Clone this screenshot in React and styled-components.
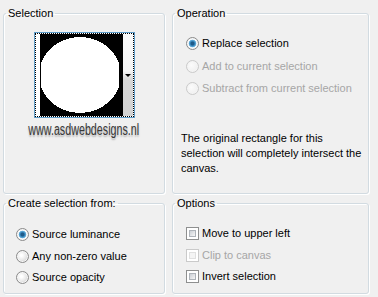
import React from 'react'
import styled, { createGlobalStyle } from 'styled-components'

const GlobalStyle = createGlobalStyle`
  html, body {
    margin: 0;
    padding: 0;
    background: #f0f0f0;
  }
  body {
    font-family: "Liberation Sans", Arial, sans-serif;
    font-size: 11px;
    color: #000;
  }
`;

const Dialog = styled.div`
  display: grid;
  grid-template-columns: 162px 197px;
  grid-template-rows: 188px 98px;
  column-gap: 7px;
  row-gap: 2px;
  padding: 6px 0 0 3px;
  width: 378px;
  height: 297px;
  box-sizing: border-box;
  background: #f0f0f0;
`;

const Group = styled.fieldset`
  margin: 0;
  min-width: 0;
  padding: ${props => props.$padTop || 14}px 8px 0 8px;
  border: 1px solid #d2dbe1;
  border-radius: 3px;
  box-shadow: 1px 1px 0 #fff, inset 1px 1px 0 #fff;
  box-sizing: border-box;

  legend {
    margin-left: -6px;
    padding: 0 2px;
    line-height: 15px;
    font-size: 11px;
  }
`;

const PreviewColumn = styled.div`
  display: flex;
  flex-direction: column;
  align-items: center;
`;

const PreviewFrame = styled.div`
  width: 101px;
  height: 86px;
  box-sizing: border-box;
  border: 1px solid #5f9cc8;
  position: relative;
  display: flex;
  background: #fff;

  &::after {
    content: '';
    position: absolute;
    inset: 0;
    border: 1px dotted #000;
    pointer-events: none;
  }
`;

const PreviewCanvas = styled.div`
  margin: 1px 0 1px 5px;
  width: 83px;
  height: 82px;
  background: #000;
  display: flex;
`;

const DropStrip = styled.div`
  flex: 1;
  margin: 1px 1px 1px 0;
  background: linear-gradient(#fafafa 0%, #f4f4f4 45%, #d6d6d6 55%, #d2d2d2 100%);
  display: flex;
  align-items: center;
  justify-content: flex-end;
  padding-right: 2px;

  &::before {
    content: '';
    border-left: 3px solid transparent;
    border-right: 3px solid transparent;
    border-top: 3px solid #000;
  }
`;

const Watermark = styled.div`
  margin-top: 3px;
  font-family: "Liberation Sans", Arial, sans-serif;
  font-size: 16px;
  line-height: 17px;
  color: #383838;
  text-shadow: 0 2px 2px rgba(0, 0, 0, 0.25);
  white-space: nowrap;
  transform: scaleX(0.67);
`;

const OptionList = styled.div`
  display: flex;
  flex-direction: column;
  gap: ${props => props.$gap}px;
  padding-left: ${props => props.$indent}px;
`;

const OptionRow = styled.label`
  display: flex;
  align-items: center;
  gap: 3px;
  height: 15px;
  line-height: 15px;
  font-size: 11px;
  color: ${props => (props.$disabled ? '#a6a6a6' : '#000')};
  white-space: nowrap;
`;

const RadioMark = styled.span`
  width: 13px;
  height: 13px;
  border-radius: 50%;
  box-sizing: border-box;
  flex: none;
  border: 1px solid ${props => (props.$disabled ? '#cacaca' : '#8b8b8b')};
  background: ${props =>
    props.$checked
      ? 'radial-gradient(circle at 50% 50%, #1f5b8a 0 1.5px, #3d8fc4 2.5px, #68b0dc 3.5px, #fff 4.2px, #f2f2f2 5px)'
      : props.$disabled
      ? 'radial-gradient(circle at 40% 40%, #fbfbfb, #ececec)'
      : 'radial-gradient(circle at 40% 40%, #ffffff 0 1px, #e6e6e6 5px, #d4d4d4 6px)'};
  box-shadow: inset 0 0 0 1px ${props => (props.$disabled ? '#f4f4f4' : '#f6f6f6')};
`;

const CheckMark = styled.span`
  width: 13px;
  height: 13px;
  box-sizing: border-box;
  flex: none;
  border: 1px solid ${props => (props.$disabled ? '#cacaca' : '#8e8f8f')};
  background: #fff;
  padding: 2px;

  &::before {
    content: '';
    display: block;
    width: 100%;
    height: 100%;
    box-sizing: border-box;
    border: 1px solid ${props => (props.$disabled ? '#e0e0e0' : '#aeb3b9')};
    background: ${props =>
      props.$disabled
        ? '#f4f4f4'
        : 'linear-gradient(135deg, #cbcfd5 0%, #f6f6f6 100%)'};
  }
`;

const Note = styled.p`
  margin: ${props => props.$top}px 0 0 0;
  line-height: 15px;
  font-size: 11px;
  width: 188px;
`;

const Radio = ({ label, checked, disabled }) => (
  <OptionRow $disabled={disabled}>
    <RadioMark $checked={checked} $disabled={disabled} />
    {label}
  </OptionRow>
)

const Check = ({ label, disabled }) => (
  <OptionRow $disabled={disabled}>
    <CheckMark $disabled={disabled} />
    {label}
  </OptionRow>
)

const Preview = () => (
  <PreviewFrame>
    <PreviewCanvas>
      <svg width="83" height="82" viewBox="0 0 83 82" shapeRendering="crispEdges">
        <defs>
          <clipPath id="clipPreview">
            <rect x="1" y="0" width="78" height="82" />
          </clipPath>
        </defs>
        <ellipse cx="40" cy="41" rx="41" ry="38" fill="#fff" clipPath="url(#clipPreview)" />
      </svg>
    </PreviewCanvas>
    <DropStrip />
  </PreviewFrame>
)

export default function App() {
  return (
    <>
      <GlobalStyle />
      <Dialog>
        <Group $padTop={11}>
          <legend>Selection</legend>
          <PreviewColumn>
            <Preview />
            <Watermark>www.asdwebdesigns.nl</Watermark>
          </PreviewColumn>
        </Group>

        <Group $padTop={15}>
          <legend>Operation</legend>
          <OptionList $gap={7.5} $indent={5}>
            <Radio label="Replace selection" checked />
            <Radio label="Add to current selection" disabled />
            <Radio label="Subtract from current selection" disabled />
          </OptionList>
          <Note $top={35}>
            The original rectangle for this selection will completely intersect the canvas.
          </Note>
        </Group>

        <Group $padTop={16}>
          <legend>Create selection from:</legend>
          <OptionList $gap={6.5} $indent={4}>
            <Radio label="Source luminance" checked />
            <Radio label="Any non-zero value" />
            <Radio label="Source opacity" />
          </OptionList>
        </Group>

        <Group $padTop={15}>
          <legend>Options</legend>
          <OptionList $gap={6.5} $indent={5}>
            <Check label="Move to upper left" />
            <Check label="Clip to canvas" disabled />
            <Check label="Invert selection" />
          </OptionList>
        </Group>
      </Dialog>
    </>
  )
}
